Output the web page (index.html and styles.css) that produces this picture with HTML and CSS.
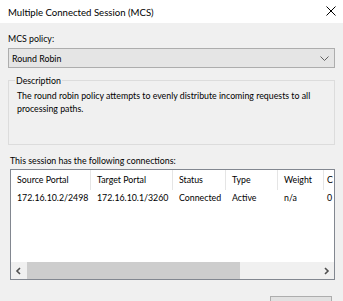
FILE: index.html
```html
<!DOCTYPE html>
<html lang="en">
<head>
    <meta charset="UTF-8">
    <title>Multiple Connected Session (MCS)</title>
    <link rel="stylesheet" href="styles.css">
</head>
<body>
    <div class="titlebar">
        <span class="title">Multiple Connected Session (MCS)</span>
        <svg class="close" width="10" height="10" viewBox="0 0 10 10">
            <path d="M0.5 0.5 L9.5 9.5 M9.5 0.5 L0.5 9.5" stroke="#000" stroke-width="1" fill="none"/>
        </svg>
    </div>
    <div class="content">
        <div class="label">MCS policy:</div>
        <div class="combo">
            <span>Round Robin</span>
            <svg width="9" height="5" viewBox="0 0 9 5">
                <path d="M0.5 0.5 L4.5 4.5 L8.5 0.5" stroke="#606060" fill="none"/>
            </svg>
        </div>
        <fieldset class="group">
            <legend>Description</legend>
            <p>The round robin policy attempts to evenly distribute incoming requests to all processing paths.</p>
        </fieldset>
        <div class="label conn-label">This session has the following connections:</div>
        <div class="list">
            <div class="list-head">
                <div class="col c1">Source Portal</div>
                <div class="col c2">Target Portal</div>
                <div class="col c3">Status</div>
                <div class="col c4">Type</div>
                <div class="col c5">Weight</div>
                <div class="col c6">C</div>
            </div>
            <div class="list-row">
                <div class="col c1">172.16.10.2/2498</div>
                <div class="col c2">172.16.10.1/3260</div>
                <div class="col c3">Connected</div>
                <div class="col c4">Active</div>
                <div class="col c5">n/a</div>
                <div class="col c6">0</div>
            </div>
            <div class="list-fill"></div>
            <div class="hscroll">
                <svg width="16" height="16" viewBox="0 0 16 16">
                    <path d="M9 5 L6 8 L9 11" stroke="#505050" stroke-width="1.6" fill="none"/>
                </svg>
                <div class="track"><div class="thumb"></div></div>
                <svg width="16" height="16" viewBox="0 0 16 16">
                    <path d="M7 5 L10 8 L7 11" stroke="#505050" stroke-width="1.6" fill="none"/>
                </svg>
            </div>
        </div>
        <div class="buttons">
            <button class="btn"></button>
        </div>
    </div>
</body>
</html>
```

FILE: styles.css
```css
html, body {
    margin: 0;
    padding: 0;
}
body {
    width: 343px;
    height: 301px;
    overflow: hidden;
    background-color: #f0f0f0;
    font-family: Lato, "Liberation Sans", sans-serif;
    font-size: 8.8px;
    color: #000;
}
.titlebar {
    height: 23px;
    background-color: #fff;
    display: flex;
    align-items: center;
    justify-content: space-between;
    padding: 0 7px 0 8px;
}
.title {
    font-size: 9.6px;
    margin-top: 2px;
}
.close {
    margin-top: -1px;
}
.content {
    padding: 0 8px;
}
.label {
    height: 15px;
    line-height: 15px;
    margin-top: 8px;
}
.combo {
    margin-top: 2px;
    height: 18px;
    border: 1px solid #adadad;
    background-color: #e5e5e5;
    display: flex;
    align-items: center;
    justify-content: space-between;
    padding: 0 5px 0 3px;
}
.group {
    margin: 5px 0 0 0;
    padding: 0 8px;
    border: 1px solid #dcdcdc;
    box-sizing: border-box;
    height: 72px;
}
.group legend {
    padding: 0 1px;
    margin-left: -2px;
    height: 15px;
    line-height: 15px;
}
.group p {
    margin: 1px 0 0 0;
    line-height: 13px;
}
.conn-label {
    margin-top: 8px;
    padding-left: 2px;
}
.list {
    margin: 1px 0 0 2px;
    height: 109px;
    border: 1px solid #828790;
    background-color: #fff;
    display: flex;
    flex-direction: column;
}
.list-head, .list-row {
    display: flex;
    white-space: nowrap;
    overflow: hidden;
    flex: none;
}
.list-head {
    height: 20px;
    align-items: center;
}
.list-head .col {
    border-right: 1px solid #e5e5e5;
    height: 20px;
    line-height: 20px;
}
.list-row {
    height: 15px;
    line-height: 15px;
}
.col {
    box-sizing: border-box;
    padding-left: 6px;
    flex: none;
    overflow: hidden;
}
.c1 { width: 80px; }
.c2 { width: 82px; }
.c3 { width: 53px; }
.c4 { width: 52px; }
.c5 { width: 46px; }
.c6 { width: 20px; padding-left: 3px; }
.list-fill {
    flex: 1;
}
.hscroll {
    height: 17px;
    flex: none;
    background-color: #f0f0f0;
    display: flex;
    align-items: center;
}
.track {
    flex: 1;
    height: 100%;
    display: flex;
    align-items: center;
}
.thumb {
    width: 213px;
    height: 100%;
    background-color: #cdcdcd;
}
.buttons {
    display: flex;
    justify-content: flex-end;
    margin-top: 16px;
    padding-right: 3px;
}
.btn {
    width: 62px;
    height: 23px;
    border: 1px solid #adadad;
    background-color: #e1e1e1;
}
```
